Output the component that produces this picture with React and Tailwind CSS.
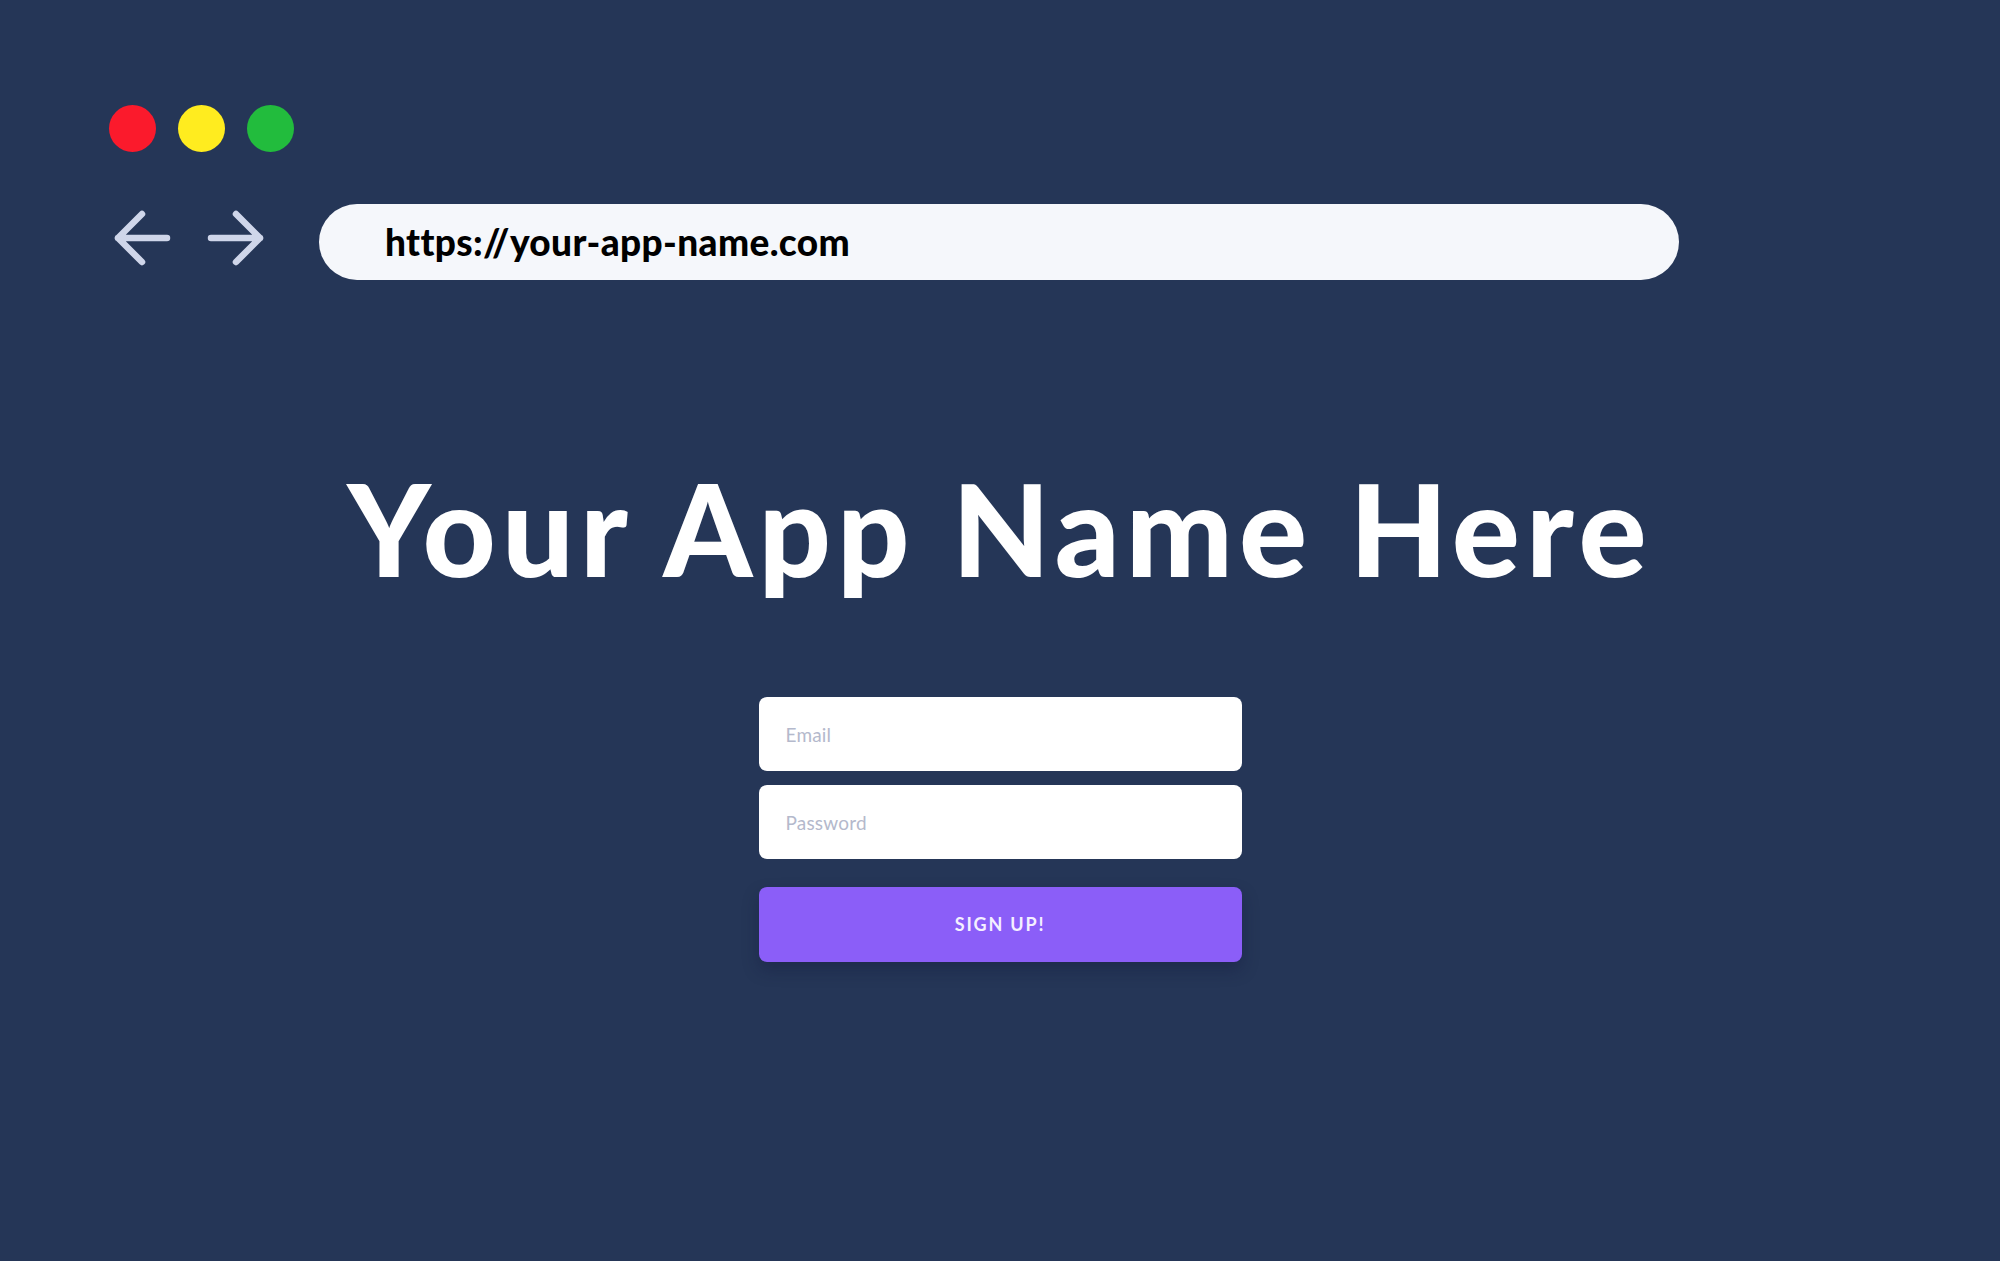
function ArrowIcon({ dir }) {
  return (
    <svg width="58" height="56" viewBox="0 0 58 56" fill="none" className={dir === "right" ? "-scale-x-100" : ""}>
      <path
        d="M4 28 H53 M28 4 L4 28 L28 52"
        stroke="#cfd6ea"
        strokeWidth="6.5"
        strokeLinecap="round"
        strokeLinejoin="round"
      />
    </svg>
  )
}

export default function App() {
  return (
    <div className="h-[1261px] w-full overflow-hidden bg-[#253657] pt-[105px] font-['Lato',sans-serif]">
      <div className="flex gap-[22px] pl-[109px]">
        <span className="h-[47px] w-[47px] rounded-full bg-[#fb1a2c]" />
        <span className="h-[47px] w-[47px] rounded-full bg-[#ffec1f]" />
        <span className="h-[47px] w-[47px] rounded-full bg-[#22bc3d]" />
      </div>

      <div className="mt-[52px] flex items-center pl-[114px]">
        <div className="mb-[9px] flex items-center gap-[34px]">
          <ArrowIcon dir="left" />
          <ArrowIcon dir="right" />
        </div>
        <div className="ml-[55px] flex h-[76px] w-[1360px] items-center rounded-full bg-[#f5f7fb] pl-[66px]">
          <span className="text-[37px] font-black tracking-[0.01em] text-black">https://your-app-name.com</span>
        </div>
      </div>

      <h1 className="mt-[185px] text-center text-[127px] font-black leading-none tracking-[0.048em] text-white">
        Your App Name Here
      </h1>

      <form className="mx-auto mt-[105px] flex w-[483px] flex-col">
        <input
          type="email"
          placeholder="Email"
          className="h-[74px] rounded-[8px] bg-white px-[27px] text-[19px] tracking-[0.01em] text-gray-700 outline-none placeholder:text-[#b4b9cc]"
        />
        <input
          type="password"
          placeholder="Password"
          className="mt-[14px] h-[74px] rounded-[8px] bg-white px-[27px] text-[19px] tracking-[0.01em] text-gray-700 outline-none placeholder:text-[#b4b9cc]"
        />
        <button
          type="button"
          className="mt-[28px] h-[75px] rounded-[8px] bg-[#8b5ef8] text-[18px] font-bold tracking-[0.1em] text-[#f4f0ff] shadow-[0_8px_16px_rgba(18,22,60,0.35)]"
        >
          SIGN UP!
        </button>
      </form>
    </div>
  )
}
